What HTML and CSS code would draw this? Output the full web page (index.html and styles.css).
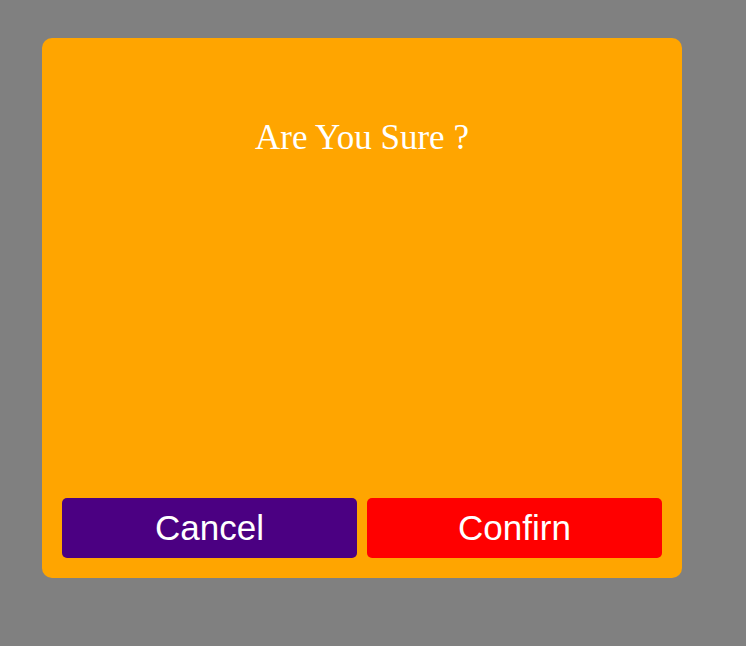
FILE: index.html
```html
<!DOCTYPE html>
<html>
<head>
<meta charset="utf-8">
<link rel="stylesheet" href="styles.css">
</head>
<body>
<div class="modal">
  <h1 class="title">Are You Sure ?</h1>
  <div class="actions">
    <button class="btn cancel">Cancel</button>
    <button class="btn confirm">Confirn</button>
  </div>
</div>
</body>
</html>
```
FILE: styles.css
```css
html, body {
  margin: 0;
  padding: 0;
  background: #808080;
  width: 746px;
  height: 646px;
  overflow: hidden;
}
body {
  padding: 38px 0 0 42px;
  box-sizing: border-box;
}
.modal {
  width: 640px;
  height: 540px;
  box-sizing: border-box;
  background: #ffa500;
  border-radius: 10px;
  padding: 20px;
  display: flex;
  flex-direction: column;
  justify-content: space-between;
}
.title {
  margin: 60px 0 0;
  text-align: center;
  color: #fff;
  font-family: "Liberation Serif", "Times New Roman", serif;
  font-weight: normal;
  font-size: 35px;
  line-height: 40px;
}
.actions {
  display: flex;
  gap: 10px;
}
.btn {
  flex: 1;
  height: 60px;
  border: none;
  border-radius: 5px;
  color: #fff;
  font-family: "Liberation Sans", Arial, sans-serif;
  font-size: 35px;
  padding: 0;
}
.cancel { background: #4b0082; }
.confirm { background: #ff0000; }
```
